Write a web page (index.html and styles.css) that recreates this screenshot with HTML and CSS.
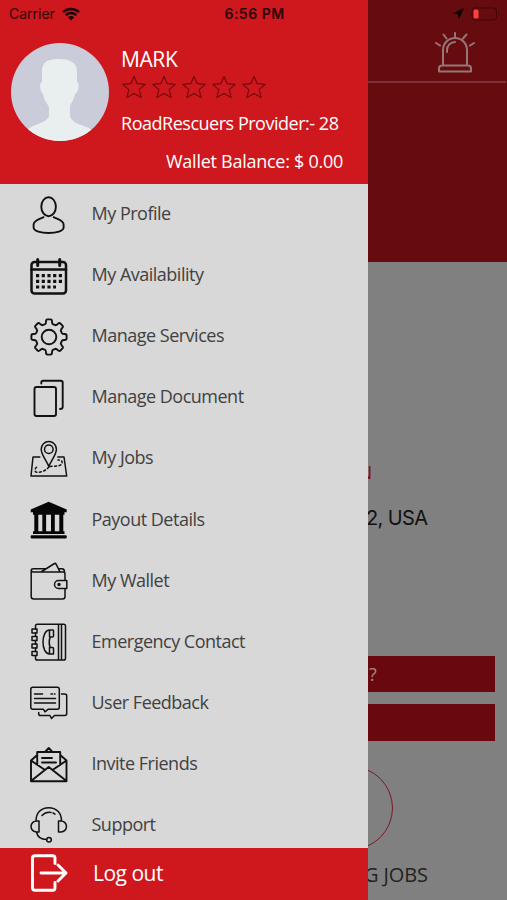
FILE: index.html
```html
<!DOCTYPE html>
<html lang="en">
<head>
    <meta charset="utf-8">
    <meta name="viewport" content="width=device-width, initial-scale=1.0">
    <title>RoadRescuers Provider</title>
    <link rel="stylesheet" href="styles.css">
</head>
<body>
    <div class="app">
        <main class="screen">
            <header class="hero">
                <div class="hero-bar">
                    <svg class="siren" viewBox="0 0 40 42">
                        <path d="M8 33V18a12 12 0 0 1 24 0v15M4 39.500v-3a3 3 0 0 1 3-3h26a3 3 0 0 1 3 3v3zM12 20v-2a8 8 0 0 1 8-8M20 1v4M8.500 2.500l3 4M31.500 2.500l-3.500 4M1 11l4 2.500M39 11l-4 2.500"/>
                    </svg>
                </div>
            </header>
            <p class="status">N</p>
            <p class="address">2, USA</p>
            <div class="actions">
                <div class="action">?</div>
                <div class="action"></div>
            </div>
            <div class="ring"></div>
            <p class="jobs">G JOBS</p>
        </main>

        <aside class="drawer">
            <div class="profile">
                <svg class="avatar" viewBox="0 0 98 98">
                    <clipPath id="face"><circle cx="49" cy="49" r="49"/></clipPath>
                    <g clip-path="url(#face)">
                        <rect width="98" height="98" fill="#cbccda"/>
                        <path fill="#e9eeef" d="M31 39V28C31 18 38 16 48 16s18 3 18 12v11c2 0 2 4 1 8-1 3-2 3-3 4-1 6-4 9-5 12v10c1 4 5 7 11 9 9 3 15 6 21 16H8c3-9 9-13 19-17 7-3 11-5 11-9V64c-2-4-5-7-6-13-3-2-4-12-1-12z"/>
                    </g>
                </svg>
                <div class="about">
                    <h1>MARK</h1>
                    <div class="stars">
                        <svg viewBox="0 0 26 24"><path d="M13 1.500l3.200 7.200 8 .7-6 5.200 1.900 7.800-7.100-4-7.100 4 1.900-7.800-6-5.200 8-.7z"/></svg>
                        <svg viewBox="0 0 26 24"><path d="M13 1.500l3.200 7.200 8 .7-6 5.200 1.900 7.800-7.100-4-7.100 4 1.900-7.800-6-5.200 8-.7z"/></svg>
                        <svg viewBox="0 0 26 24"><path d="M13 1.500l3.200 7.200 8 .7-6 5.200 1.900 7.800-7.100-4-7.100 4 1.900-7.800-6-5.200 8-.7z"/></svg>
                        <svg viewBox="0 0 26 24"><path d="M13 1.500l3.200 7.200 8 .7-6 5.200 1.900 7.800-7.100-4-7.100 4 1.900-7.800-6-5.200 8-.7z"/></svg>
                        <svg viewBox="0 0 26 24"><path d="M13 1.500l3.200 7.200 8 .7-6 5.200 1.900 7.800-7.100-4-7.100 4 1.900-7.800-6-5.200 8-.7z"/></svg>
                    </div>
                    <p class="provider">RoadRescuers Provider:- 28</p>
                    <p class="balance">Wallet Balance: $ 0.00</p>
                </div>
            </div>

            <nav class="menu">
                <a class="item">
                    <svg class="icon" viewBox="0 0 38 38"><ellipse cx="18.600" cy="10.700" rx="7.300" ry="9.500"/><path d="M13.500 21.200C9 23.500 3.600 24.500 3.600 28.500v3C3.600 35 11 37 18.600 37s15-2 15-5.500v-3c0-4-5.400-5-9.900-7.300"/></svg>
                    <span>My Profile</span>
                </a>
                <a class="item">
                    <svg class="icon bold" viewBox="0 0 38 38"><rect x="1.500" y="5" width="34.500" height="31.500" rx="3"/><path d="M1.500 12.500H36"/><path class="post" d="M7.700 2.500v6M29.700 2.500v6"/><path class="dots" d="M6 18.700h26M6 24.400h26M6 30h20"/></svg>
                    <span>My Availability</span>
                </a>
                <a class="item">
                    <svg class="icon" viewBox="-19 -19 38 38"><circle r="7.300"/><path d="M-3.800-12.900Q-3-13.500-3-15.500Q-3-17.600-1.500-17.600H1.500Q3-17.600 3-15.500Q3-13.500 3.800-12.900L6.400-11.800Q7.500-12 8.800-13.100Q10.300-14.500 11.400-13.500L13.500-11.400Q14.500-10.300 13.100-8.800Q12-7.500 11.800-6.400L12.900-3.800Q13.500-3 15.500-3Q17.600-3 17.600-1.500V1.500Q17.600 3 15.500 3Q13.500 3 12.900 3.800L11.800 6.400Q12 7.500 13.100 8.800Q14.500 10.300 13.500 11.400L11.400 13.500Q10.300 14.500 8.800 13.100Q7.500 12 6.400 11.800L3.800 12.900Q3 13.500 3 15.500Q3 17.600 1.500 17.600H-1.500Q-3 17.600-3 15.500Q-3 13.500-3.800 12.900L-6.400 11.800Q-7.500 12-8.800 13.100Q-10.300 14.500-11.400 13.500L-13.500 11.400Q-14.500 10.300-13.100 8.800Q-12 7.500-11.800 6.400L-12.900 3.800Q-13.500 3-15.500 3Q-17.600 3-17.600 1.500V-1.500Q-17.600-3-15.500-3Q-13.500-3-12.900-3.800L-11.800-6.400Q-12-7.500-13.100-8.800Q-14.500-10.300-13.500-11.400L-11.400-13.500Q-10.300-14.500-8.800-13.100Q-7.500-12-6.400-11.800Z"/></svg>
                    <span>Manage Services</span>
                </a>
                <a class="item">
                    <svg class="icon" viewBox="0 0 38 38"><rect x="4.500" y="8" width="21.500" height="29" rx="2"/><path d="M11.300 4.500v-1q0-1.700 1.700-1.700h17.800q1.900 0 1.900 1.900v24.300q0 2-2.700 2"/></svg>
                    <span>Manage Document</span>
                </a>
                <a class="item">
                    <svg class="icon thin" viewBox="0 0 38 38"><path d="M18.800 26.500C17 21 11.200 15 11.200 9.200a7.600 7.600 0 0 1 15.200 0c0 5.800-5.800 11.800-7.600 17.300z"/><circle cx="18.800" cy="9.200" r="4.300"/><path d="M9.800 17H3L1 36h35.700L34 17h-6.200"/><path class="dash" d="M18.800 27c-3 4-9 6-13 5-2-2 0-5 3-6M20 26.500c5-.5 11 0 12-3 1-3-2-3.500-4-3.500"/></svg>
                    <span>My Jobs</span>
                </a>
                <a class="item">
                    <svg class="icon solid" viewBox="0 0 38 38"><path d="M.7 8.500L18.700.7l18 7.800v2.700H.7zM3 11.200h31.500v2.500H3zM4.300 13.500h4v17h-4zM12.300 13.500h3.800v17h-3.800zM21 13.500h3.800v17H21zM29.300 13.500h4v17h-4zM3 30.300h31.500v2.700H3z"/><rect x=".7" y="34.300" width="36" height="3.200" rx="1"/></svg>
                    <span>Payout Details</span>
                </a>
                <a class="item">
                    <svg class="icon thin" viewBox="0 0 38 38"><path d="M35 18.500V12c0-1.500-.5-2-2-2H3.500C.5 10 .5 6.700 3.500 6.700h12M1.200 8.500v26q0 2.500 2.500 2.500h29q2.300 0 2.300-2.500v-8M28.500 6.700H32q2.500 0 2.500 3.300M11 10L24.500 1.500q1-.5 1.700.8l3.800 7.500M36.800 18.500h-8.300a4 4 0 0 0 0 8h8.300z"/><circle class="fill" cx="29" cy="22.500" r="1"/></svg>
                    <span>My Wallet</span>
                </a>
                <a class="item">
                    <svg class="icon thin" viewBox="0 0 38 38"><path d="M5.500 6V3q0-1.800 1.800-1.800h26.400q1.800 0 1.800 1.800v32.200q0 1.800-1.800 1.800H7.300q-1.800 0-1.800-1.800V33M28.500 1.200V37M31.500 1.200V37M5.500 10v3.500M5.500 17.500V21M5.500 25v3.500"/><path d="M2 6h5v4H2zM2 13.500h5v4H2zM2 21h5v4H2zM2 28.500h5v4H2z"/><path d="M23.500 7.500v5.500q0 1-1 1h-2.500c-1 3-1 7 0 10.500h2.500q1 0 1 1V31h-4c-4 0-6.500-5.500-6.500-12S15.500 7 19.500 7h3.500zM19.500 7.500v6M19.500 24.500v6"/></svg>
                    <span>Emergency Contact</span>
                </a>
                <a class="item">
                    <svg class="icon thin" viewBox="0 0 38 38"><path d="M2.800 3.300h24.500q2 0 2 2v18q0 2-2 2H18l-3 2.500-1.500-2.500H2.800q-2 0-2-2v-18q0-2 2-2zM4.500 10h8M21 10h1.500M24.500 10h.5M4.500 14.500h21M4.500 19h21M31.500 10h3.200q2 0 2 2v17.500q0 2-2 2H24.500L21.500 34.500 20 31.500H10.500q-1.800 0-1.800-1.800V28.500"/></svg>
                    <span>User Feedback</span>
                </a>
                <a class="item">
                    <svg class="icon" viewBox="0 0 38 38"><path d="M7.200 20V7h23v13M15 7l3.700-4L22.500 7M12 13h10M12 17.500h14M7.200 10L1 15.500v20.700h35.500V15.500L30.200 10M1 15.500l14 9.500M36.500 15.500l-14 9.500M1 36l17.700-14L36.500 36"/></svg>
                    <span>Invite Friends</span>
                </a>
                <a class="item">
                    <svg class="icon thin" viewBox="0 0 38 38"><path d="M6 15C6 7 11 1.700 18.700 1.700S31.500 7 31.500 15M12 9.500c3-3 6-3.500 9-3M23 7l2 1.200M9 15v11H6.500a5.500 5.500 0 0 1 0-11zM28.500 15v11H31a5.500 5.500 0 0 0 0-11zM6.500 26c1 5 4 7.500 10 7.500"/><circle cx="19" cy="33.700" r="2.300"/></svg>
                    <span>Support</span>
                </a>
            </nav>

            <a class="logout">
                <svg class="icon" viewBox="0 0 38 38"><path d="M25 9.500V4q0-2.200-2.200-2.200H5Q2.500 1.800 2.500 4v30q0 2.200 2.500 2.200h17.800q2.200 0 2.200-2.200v-5.500M11 19h25M28 11l8 8-8 8"/></svg>
                <span>Log out</span>
            </a>
        </aside>

        <div class="statusbar">
            <div class="carrier">
                <span>Carrier</span>
                <svg class="wifi" viewBox="0 0 18 14"><path d="M1 5.200a11.500 11.500 0 0 1 16 0M3.800 8.200a7.500 7.500 0 0 1 10.400 0"/><path class="fill" d="M9 13.500L5.800 10.300a4.600 4.600 0 0 1 6.400 0z"/></svg>
            </div>
            <span class="clock">6:56 PM</span>
            <div class="power">
                <svg class="arrow" viewBox="0 0 12 12"><path d="M12 0L6.800 11.500 6 6.200.5 5.500z"/></svg>
                <svg class="battery" viewBox="0 0 29 14"><rect class="shell" x="1" y="1" width="24.500" height="12" rx="3"/><rect class="level" x="2.500" y="2.500" width="5" height="9" rx="1.500"/><path class="cap" d="M27 5q2 2 0 4z"/></svg>
            </div>
        </div>
    </div>
</body>
</html>
```

FILE: styles.css
```css
* {
    box-sizing: border-box;
}

body {
    margin: 0;
    font-family: "Open Sans", sans-serif;
}

h1, p {
    margin: 0;
    font-weight: normal;
}

svg {
    display: block;
    flex: none;
    fill: none;
    stroke-linecap: round;
    stroke-linejoin: round;
}

.app {
    position: relative;
    width: 507px;
    height: 900px;
    overflow: hidden;
    background: #808080;
}

/* Dimmed page under the drawer */
.screen {
    display: flex;
    flex-direction: column;
    height: 900px;
}

.hero {
    height: 262px;
    background: #670c0e;
}

.hero-bar {
    display: flex;
    justify-content: flex-end;
    height: 83px;
    margin-right: 1px;
    padding: 32px 31px 0 0;
    border-bottom: 2px solid #7a3336;
}

.siren {
    width: 40px;
    height: 42px;
    stroke: #957777;
    stroke-width: 2;
}

.status {
    height: 24px;
    margin-top: 198px;
    padding-left: 358px;
    font-size: 19px;
    line-height: 24px;
    color: #86091d;
}

.address {
    height: 30px;
    margin-top: 19px;
    padding-left: 366px;
    font-family: Inter, sans-serif;
    font-size: 20px;
    line-height: 30px;
    letter-spacing: -0.6px;
    color: #111;
}

.actions {
    display: flex;
    flex-direction: column;
    gap: 12px;
    margin: 122.500px 12px 0;
}

.action {
    height: 36.500px;
    padding-left: 357px;
    background: #6a090d;
    color: #a78688;
    font-size: 18px;
    line-height: 36px;
}

.ring {
    width: 84px;
    height: 84px;
    margin: 25px 0 0 309px;
    border: 1.500px solid #7a1727;
    border-radius: 50%;
}

.jobs {
    margin-top: 10px;
    padding-left: 364px;
    font-size: 20px;
    line-height: 30px;
    letter-spacing: -0.1px;
    color: #222;
}

.drawer {
    position: absolute;
    top: 0;
    left: 0;
    display: flex;
    flex-direction: column;
    width: 368px;
    height: 900px;
    background: #d8d8d8;
}

.profile {
    display: flex;
    flex: none;
    gap: 12px;
    height: 184px;
    padding: 43px 0 0 11px;
    background: #cf171e;
    color: #fff;
}

.avatar {
    width: 98px;
    height: 98px;
}

.about h1 {
    height: 32px;
    font-size: 21px;
    line-height: 32px;
    letter-spacing: -0.4px;
}

.stars {
    display: flex;
    gap: 4px;
    height: 24px;
}

.stars svg {
    width: 26px;
    height: 24px;
    stroke: #74080d;
    stroke-width: 1.2;
}

.provider {
    height: 32px;
    margin-top: 8px;
    font-size: 18px;
    line-height: 32px;
    letter-spacing: -0.48px;
}

.balance {
    height: 32px;
    margin-top: 6px;
    padding-left: 45px;
    font-size: 18px;
    line-height: 32px;
    letter-spacing: -0.26px;
}

.menu {
    display: flex;
    flex: 1;
    flex-direction: column;
    min-height: 0;
    overflow: hidden;
}

.item {
    display: flex;
    flex: none;
    align-items: center;
    gap: 24px;
    height: 61.1px;
    padding-left: 29.500px;
    font-size: 18px;
    letter-spacing: -0.5px;
    color: #414141;
}

.item span {
    margin-top: -3px;
}

.icon {
    width: 38px;
    height: 38px;
    stroke: #111;
    stroke-width: 1.9;
}

.icon.thin {
    stroke-width: 1.5;
}

.icon.bold {
    stroke-width: 2.5;
}

.icon .post {
    stroke-width: 3;
}

.icon .dots {
    stroke-width: 3.2;
    stroke-linecap: butt;
    stroke-dasharray: 3.2 2.5;
}

.icon .dash {
    stroke-dasharray: 2 2.5;
}

.icon.solid {
    fill: #050505;
    stroke: none;
}

.icon .fill {
    fill: #111;
}

.logout {
    display: flex;
    flex: none;
    align-items: center;
    gap: 25px;
    height: 52.500px;
    padding: 0 0 2px 30px;
    background: #cf171e;
    font-size: 21px;
    letter-spacing: -0.5px;
    color: #fff;
}

.logout .icon {
    stroke: #fff;
    stroke-width: 2.9;
}

/* Status bar runs over the page and the drawer */
.statusbar {
    position: absolute;
    top: 0;
    left: 0;
    display: grid;
    grid-template-columns: 1fr auto 1fr;
    align-items: center;
    width: 507px;
    height: 27px;
    padding: 0 7px 0 9px;
    font-family: Inter, sans-serif;
    font-size: 14px;
    color: #2a0507;
}

.carrier, .power {
    display: flex;
    align-items: center;
    gap: 7px;
}

.power {
    justify-content: flex-end;
}

.clock {
    font-weight: 600;
    letter-spacing: 0.5px;
}

.wifi {
    width: 18px;
    height: 14px;
    stroke: #1c0304;
    stroke-width: 2.5;
    stroke-linecap: butt;
}

.wifi .fill {
    fill: #1c0304;
    stroke: none;
}

.arrow {
    width: 12px;
    height: 12px;
    fill: #0c0101;
}

.battery {
    width: 29px;
    height: 14px;
}

.battery .shell {
    stroke: #430507;
    stroke-width: 1;
}

.battery .level {
    fill: #ff4038;
}

.battery .cap {
    fill: #430507;
}
```
